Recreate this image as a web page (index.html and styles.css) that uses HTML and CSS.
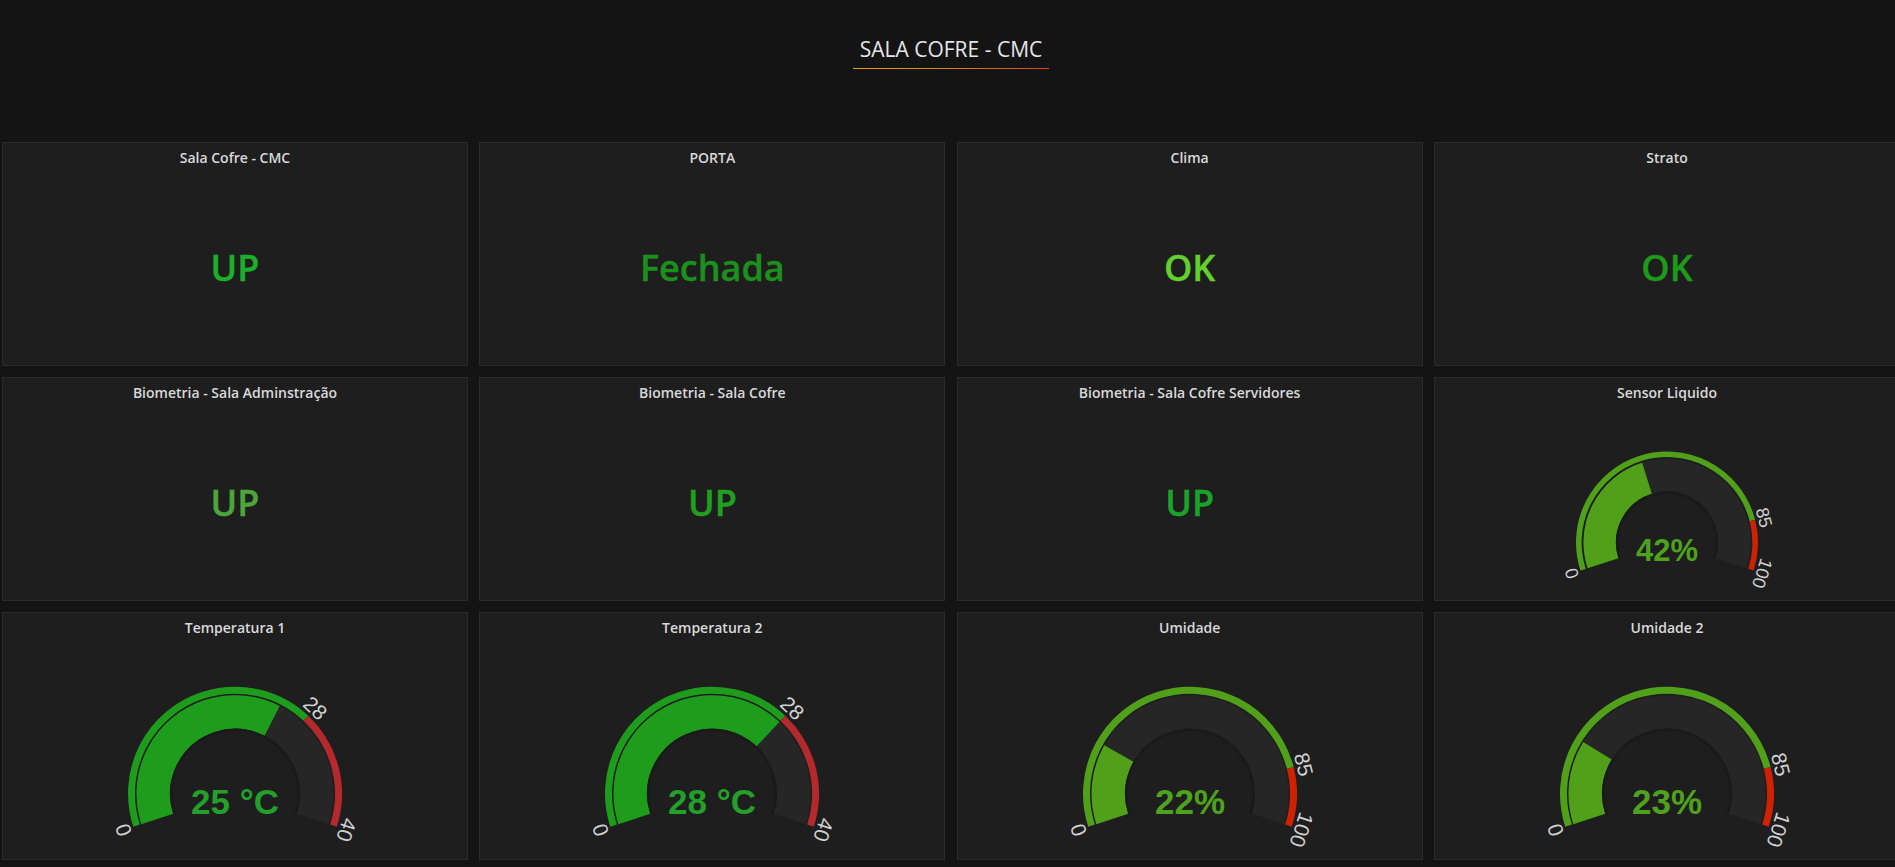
FILE: index.html
```html
<!DOCTYPE html>
<html lang="pt">
<head>
<meta charset="utf-8">
<title>SALA COFRE - CMC</title>
<link rel="stylesheet" href="styles.css">
</head>
<body>
<header class="header">
  <h1 class="dash-title">SALA COFRE - CMC</h1>
</header>
<main class="grid">
  <section class="panel">
    <div class="panel-title">Sala Cofre - CMC</div>
    <div class="panel-body"><span class="stat stat-up1">UP</span></div>
  </section>
  <section class="panel">
    <div class="panel-title">PORTA</div>
    <div class="panel-body"><span class="stat stat-door">Fechada</span></div>
  </section>
  <section class="panel">
    <div class="panel-title">Clima</div>
    <div class="panel-body"><span class="stat stat-clima">OK</span></div>
  </section>
  <section class="panel">
    <div class="panel-title">Strato</div>
    <div class="panel-body"><span class="stat stat-strato">OK</span></div>
  </section>

  <section class="panel">
    <div class="panel-title">Biometria - Sala Adminstração</div>
    <div class="panel-body"><span class="stat stat-up2">UP</span></div>
  </section>
  <section class="panel">
    <div class="panel-title">Biometria - Sala Cofre</div>
    <div class="panel-body"><span class="stat stat-up3">UP</span></div>
  </section>
  <section class="panel">
    <div class="panel-title">Biometria - Sala Cofre Servidores</div>
    <div class="panel-body"><span class="stat stat-up4">UP</span></div>
  </section>
  <section class="panel">
    <div class="panel-title">Sensor Liquido</div>
    <div class="panel-body">
      <svg class="gauge" viewBox="-232 0 464 194" width="464" height="194">
        <g transform="translate(0 136.5)">
          <g transform="rotate(162)">
            <circle class="g-ring hum-green" r="88.2" stroke-width="5.6" pathLength="360" stroke-dasharray="183.6 400"/>
            <circle class="g-ring hum-red" r="88.2" stroke-width="5.6" pathLength="360" stroke-dasharray="0 183.6 32.4 400"/>
            <circle class="g-bg" r="67.25" stroke-width="32.5" pathLength="360" stroke-dasharray="216 400"/>
            <circle class="g-fill hum-green" r="67.25" stroke-width="32.5" pathLength="360" stroke-dasharray="90.72 400"/>
            <circle class="g-shade" r="49.8" stroke-width="2.5" pathLength="360" stroke-dasharray="216 400"/>
          </g>
          <text class="g-label g-label-s" transform="rotate(252)" y="-94">0</text>
          <text class="g-label g-label-s" transform="rotate(75.6)" y="-94">85</text>
          <text class="g-label g-label-s" transform="rotate(108)" y="-94">100</text>
          <text class="g-value g-value-s hum-text" y="18">42%</text>
        </g>
      </svg>
    </div>
  </section>

  <section class="panel">
    <div class="panel-title">Temperatura 1</div>
    <div class="panel-body">
      <svg class="gauge" viewBox="-232 0 464 218" width="464" height="218">
        <g transform="translate(0 152.7)">
          <g transform="rotate(162)">
            <circle class="g-ring temp-green" r="103.5" stroke-width="7" pathLength="360" stroke-dasharray="151.2 400"/>
            <circle class="g-ring temp-red" r="103.5" stroke-width="7" pathLength="360" stroke-dasharray="0 151.2 64.8 400"/>
            <circle class="g-bg" r="81.75" stroke-width="33.5" pathLength="360" stroke-dasharray="216 400"/>
            <circle class="g-fill temp-green" r="81.75" stroke-width="33.5" pathLength="360" stroke-dasharray="135 400"/>
            <circle class="g-shade" r="63.7" stroke-width="2.5" pathLength="360" stroke-dasharray="216 400"/>
          </g>
          <text class="g-label" transform="rotate(252)" y="-110">0</text>
          <text class="g-label" transform="rotate(43.2)" y="-110">28</text>
          <text class="g-label" transform="rotate(108)" y="-110">40</text>
          <text class="g-value temp-text" y="20">25 °C</text>
        </g>
      </svg>
    </div>
  </section>
  <section class="panel">
    <div class="panel-title">Temperatura 2</div>
    <div class="panel-body">
      <svg class="gauge" viewBox="-232 0 464 218" width="464" height="218">
        <g transform="translate(0 152.7)">
          <g transform="rotate(162)">
            <circle class="g-ring temp-green" r="103.5" stroke-width="7" pathLength="360" stroke-dasharray="151.2 400"/>
            <circle class="g-ring temp-red" r="103.5" stroke-width="7" pathLength="360" stroke-dasharray="0 151.2 64.8 400"/>
            <circle class="g-bg" r="81.75" stroke-width="33.5" pathLength="360" stroke-dasharray="216 400"/>
            <circle class="g-fill temp-green" r="81.75" stroke-width="33.5" pathLength="360" stroke-dasharray="151.2 400"/>
            <circle class="g-shade" r="63.7" stroke-width="2.5" pathLength="360" stroke-dasharray="216 400"/>
          </g>
          <text class="g-label" transform="rotate(252)" y="-110">0</text>
          <text class="g-label" transform="rotate(43.2)" y="-110">28</text>
          <text class="g-label" transform="rotate(108)" y="-110">40</text>
          <text class="g-value temp-text" y="20">28 °C</text>
        </g>
      </svg>
    </div>
  </section>
  <section class="panel">
    <div class="panel-title">Umidade</div>
    <div class="panel-body">
      <svg class="gauge" viewBox="-232 0 464 218" width="464" height="218">
        <g transform="translate(0 152.7)">
          <g transform="rotate(162)">
            <circle class="g-ring hum-green" r="103.5" stroke-width="7" pathLength="360" stroke-dasharray="183.6 400"/>
            <circle class="g-ring hum-red" r="103.5" stroke-width="7" pathLength="360" stroke-dasharray="0 183.6 32.4 400"/>
            <circle class="g-bg" r="81.75" stroke-width="33.5" pathLength="360" stroke-dasharray="216 400"/>
            <circle class="g-fill hum-green" r="81.75" stroke-width="33.5" pathLength="360" stroke-dasharray="47.52 400"/>
            <circle class="g-shade" r="63.7" stroke-width="2.5" pathLength="360" stroke-dasharray="216 400"/>
          </g>
          <text class="g-label" transform="rotate(252)" y="-110">0</text>
          <text class="g-label" transform="rotate(75.6)" y="-110">85</text>
          <text class="g-label" transform="rotate(108)" y="-110">100</text>
          <text class="g-value hum-text" y="20">22%</text>
        </g>
      </svg>
    </div>
  </section>
  <section class="panel">
    <div class="panel-title">Umidade 2</div>
    <div class="panel-body">
      <svg class="gauge" viewBox="-232 0 464 218" width="464" height="218">
        <g transform="translate(0 152.7)">
          <g transform="rotate(162)">
            <circle class="g-ring hum-green" r="103.5" stroke-width="7" pathLength="360" stroke-dasharray="183.6 400"/>
            <circle class="g-ring hum-red" r="103.5" stroke-width="7" pathLength="360" stroke-dasharray="0 183.6 32.4 400"/>
            <circle class="g-bg" r="81.75" stroke-width="33.5" pathLength="360" stroke-dasharray="216 400"/>
            <circle class="g-fill hum-green" r="81.75" stroke-width="33.5" pathLength="360" stroke-dasharray="49.68 400"/>
            <circle class="g-shade" r="63.7" stroke-width="2.5" pathLength="360" stroke-dasharray="216 400"/>
          </g>
          <text class="g-label" transform="rotate(252)" y="-110">0</text>
          <text class="g-label" transform="rotate(75.6)" y="-110">85</text>
          <text class="g-label" transform="rotate(108)" y="-110">100</text>
          <text class="g-value hum-text" y="20">23%</text>
        </g>
      </svg>
    </div>
  </section>
</main>
</body>
</html>
```

FILE: styles.css
```css
* { box-sizing: border-box; }

html, body {
  margin: 0;
  padding: 0;
  background: #141414;
  overflow: hidden;
  font-family: "Open Sans", "Noto Sans", sans-serif;
  color: #d8d9da;
}

.header {
  height: 142px;
  display: flex;
  justify-content: center;
  align-items: flex-start;
  padding-top: 35px;
  padding-left: 7px;
}

.dash-title {
  margin: 0;
  font-size: 21px;
  font-weight: 400;
  line-height: 28px;
  color: #e4e6e8;
  padding: 0 7px 6px;
  background: linear-gradient(90deg, #d4a418 0%, #d8861c 45%, #d9471e 100%) left bottom / 100% 1px no-repeat;
}

.grid {
  display: grid;
  grid-template-columns: repeat(4, 466px);
  grid-template-rows: 224px 224px 248px;
  column-gap: 11.33px;
  row-gap: 11px;
  margin-left: 2px;
  width: 1910px;
}

.panel {
  background: #1f1e1e;
  border: 1px solid #2b2b2b;
  display: flex;
  flex-direction: column;
  min-height: 0;
}

.panel-title {
  height: 28px;
  padding-top: 5px;
  text-align: center;
  font-size: 14px;
  font-weight: 600;
  line-height: 20px;
  color: #d8d9da;
}

.panel-body {
  flex: 1;
  display: flex;
  align-items: center;
  justify-content: center;
  min-height: 0;
}

.stat {
  font-size: 36px;
  font-weight: 600;
  line-height: 1;
  -webkit-text-stroke: 0.4px currentColor;
}

.stat-up1 { color: #1cb02a; }
.stat-door { color: #1c901c; }
.stat-clima { color: #62d02e; }
.stat-strato { color: #1e9a1a; }
.stat-up2 { color: #4da63b; }
.stat-up3 { color: #1fa11f; }
.stat-up4 { color: #1aa32a; }

.gauge {
  display: block;
  align-self: stretch;
}

.g-ring, .g-bg, .g-fill, .g-shade { fill: none; }

.g-bg { stroke: #262627; }
.g-shade { stroke: #1b1a1a; }

.temp-green { stroke: #1e9c1c; }
.temp-red { stroke: #b3292c; }
.hum-green { stroke: #50a01a; }
.hum-red { stroke: #cf2200; }

.g-label {
  font-family: "Liberation Sans", Arial, sans-serif;
  font-size: 21px;
  fill: #d0d1d3;
  text-anchor: middle;
}

.g-label-s { font-size: 18px; }

.g-value {
  font-family: "Liberation Sans", Arial, sans-serif;
  font-weight: 700;
  font-size: 35px;
  text-anchor: middle;
}

.g-value-s { font-size: 31px; }

.temp-text { fill: #22a02a; }
.hum-text { fill: #4ea21d; }
```
